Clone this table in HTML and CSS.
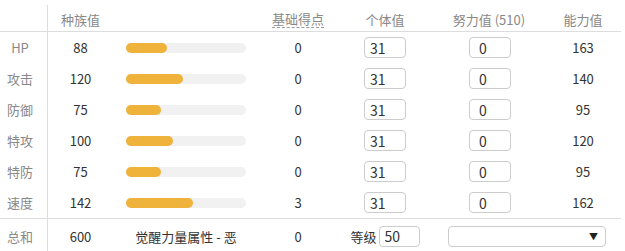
FILE: index.html
```html
<!DOCTYPE html>
<html lang="zh">
<head>
    <meta charset="UTF-8">
    <title>能力值计算</title>
    <link rel="stylesheet" href="styles.css">
</head>

<body>
    <div class="stats">
        <div class="row head">
            <div class="label"></div>
            <div>种族值</div>
            <div></div>
            <div><span class="hint">基础得点</span></div>
            <div>个体值</div>
            <div>努力值 (510)</div>
            <div>能力值</div>
        </div>

        <div class="row">
            <div class="label">HP</div>
            <div>88</div>
            <div class="bar"><span class="track"><span class="fill" style="width: 34.5%"></span></span></div>
            <div>0</div>
            <div><input class="iv" value="31"></div>
            <div><input class="ev" value="0"></div>
            <div>163</div>
        </div>
        <div class="row">
            <div class="label">攻击</div>
            <div>120</div>
            <div class="bar"><span class="track"><span class="fill" style="width: 47.1%"></span></span></div>
            <div>0</div>
            <div><input class="iv" value="31"></div>
            <div><input class="ev" value="0"></div>
            <div>140</div>
        </div>
        <div class="row">
            <div class="label">防御</div>
            <div>75</div>
            <div class="bar"><span class="track"><span class="fill" style="width: 29.4%"></span></span></div>
            <div>0</div>
            <div><input class="iv" value="31"></div>
            <div><input class="ev" value="0"></div>
            <div>95</div>
        </div>
        <div class="row">
            <div class="label">特攻</div>
            <div>100</div>
            <div class="bar"><span class="track"><span class="fill" style="width: 39.2%"></span></span></div>
            <div>0</div>
            <div><input class="iv" value="31"></div>
            <div><input class="ev" value="0"></div>
            <div>120</div>
        </div>
        <div class="row">
            <div class="label">特防</div>
            <div>75</div>
            <div class="bar"><span class="track"><span class="fill" style="width: 29.4%"></span></span></div>
            <div>0</div>
            <div><input class="iv" value="31"></div>
            <div><input class="ev" value="0"></div>
            <div>95</div>
        </div>
        <div class="row last">
            <div class="label">速度</div>
            <div>142</div>
            <div class="bar"><span class="track"><span class="fill" style="width: 55.7%"></span></span></div>
            <div>3</div>
            <div><input class="iv" value="31"></div>
            <div><input class="ev" value="0"></div>
            <div>162</div>
        </div>

        <div class="row total">
            <div class="label">总和</div>
            <div>600</div>
            <div>觉醒力量属性 - 恶</div>
            <div>0</div>
            <div class="level">等级 <input class="lv" value="50"></div>
            <div class="nature">
                <div class="select"><span class="arrow">▼</span></div>
            </div>
        </div>
    </div>
</body>
</html>
```

FILE: styles.css
```css
body {
    margin: 0;
    background: #fff;
    font-family: "Noto Sans CJK SC", "Noto Sans", sans-serif;
    font-size: 13px;
    color: #333;
}

.stats {
    margin-top: 5px;
    width: 621px;
}

.row {
    display: grid;
    grid-template-columns: 48px 65px 146px 78px 96px 112px 76px;
    height: 31px;
}

.row > div {
    display: flex;
    align-items: center;
    justify-content: center;
}

.row .label {
    border-right: 1px solid #ddd;
    padding-right: 7px;
    color: #888;
    box-sizing: border-box;
}

.head {
    height: 27px;
    border-bottom: 1px solid #ddd;
    color: #888;
    box-sizing: border-box;
}

.head > div {
    padding-top: 2px;
}

.hint {
    border-bottom: 1px dashed #999;
    line-height: 16px;
}

.last {
    height: 32px;
    border-bottom: 1px solid #ddd;
    box-sizing: border-box;
}

.row .bar {
    justify-content: flex-start;
    padding-left: 13px;
}

.track {
    display: block;
    width: 120px;
    height: 10px;
    border-radius: 5px;
    background: #f1f1f1;
}

.fill {
    display: block;
    height: 100%;
    border-radius: 5px;
    background: #efb33b;
}

input {
    width: 42px;
    height: 21px;
    box-sizing: border-box;
    border: 1px solid #ccc;
    border-radius: 4px;
    font-family: inherit;
    font-size: 14px;
    color: #333;
    outline: none;
}

.iv {
    padding: 0 0 0 5px;
}

.ev {
    padding: 0 0 0 9px;
    margin-left: 2px;
}

.total {
    height: 34px;
}

.row .level {
    gap: 2px;
}

.lv {
    width: 41px;
    padding: 0 0 0 5px;
}

.row .nature {
    grid-column: span 2;
    padding: 0 15px;
}

.select {
    width: 158px;
    height: 21px;
    box-sizing: border-box;
    border: 1px solid #ccc;
    border-radius: 4px;
    display: flex;
    align-items: center;
    justify-content: flex-end;
    padding-right: 7px;
}

.arrow {
    font-size: 9px;
    color: #222;
}
```
